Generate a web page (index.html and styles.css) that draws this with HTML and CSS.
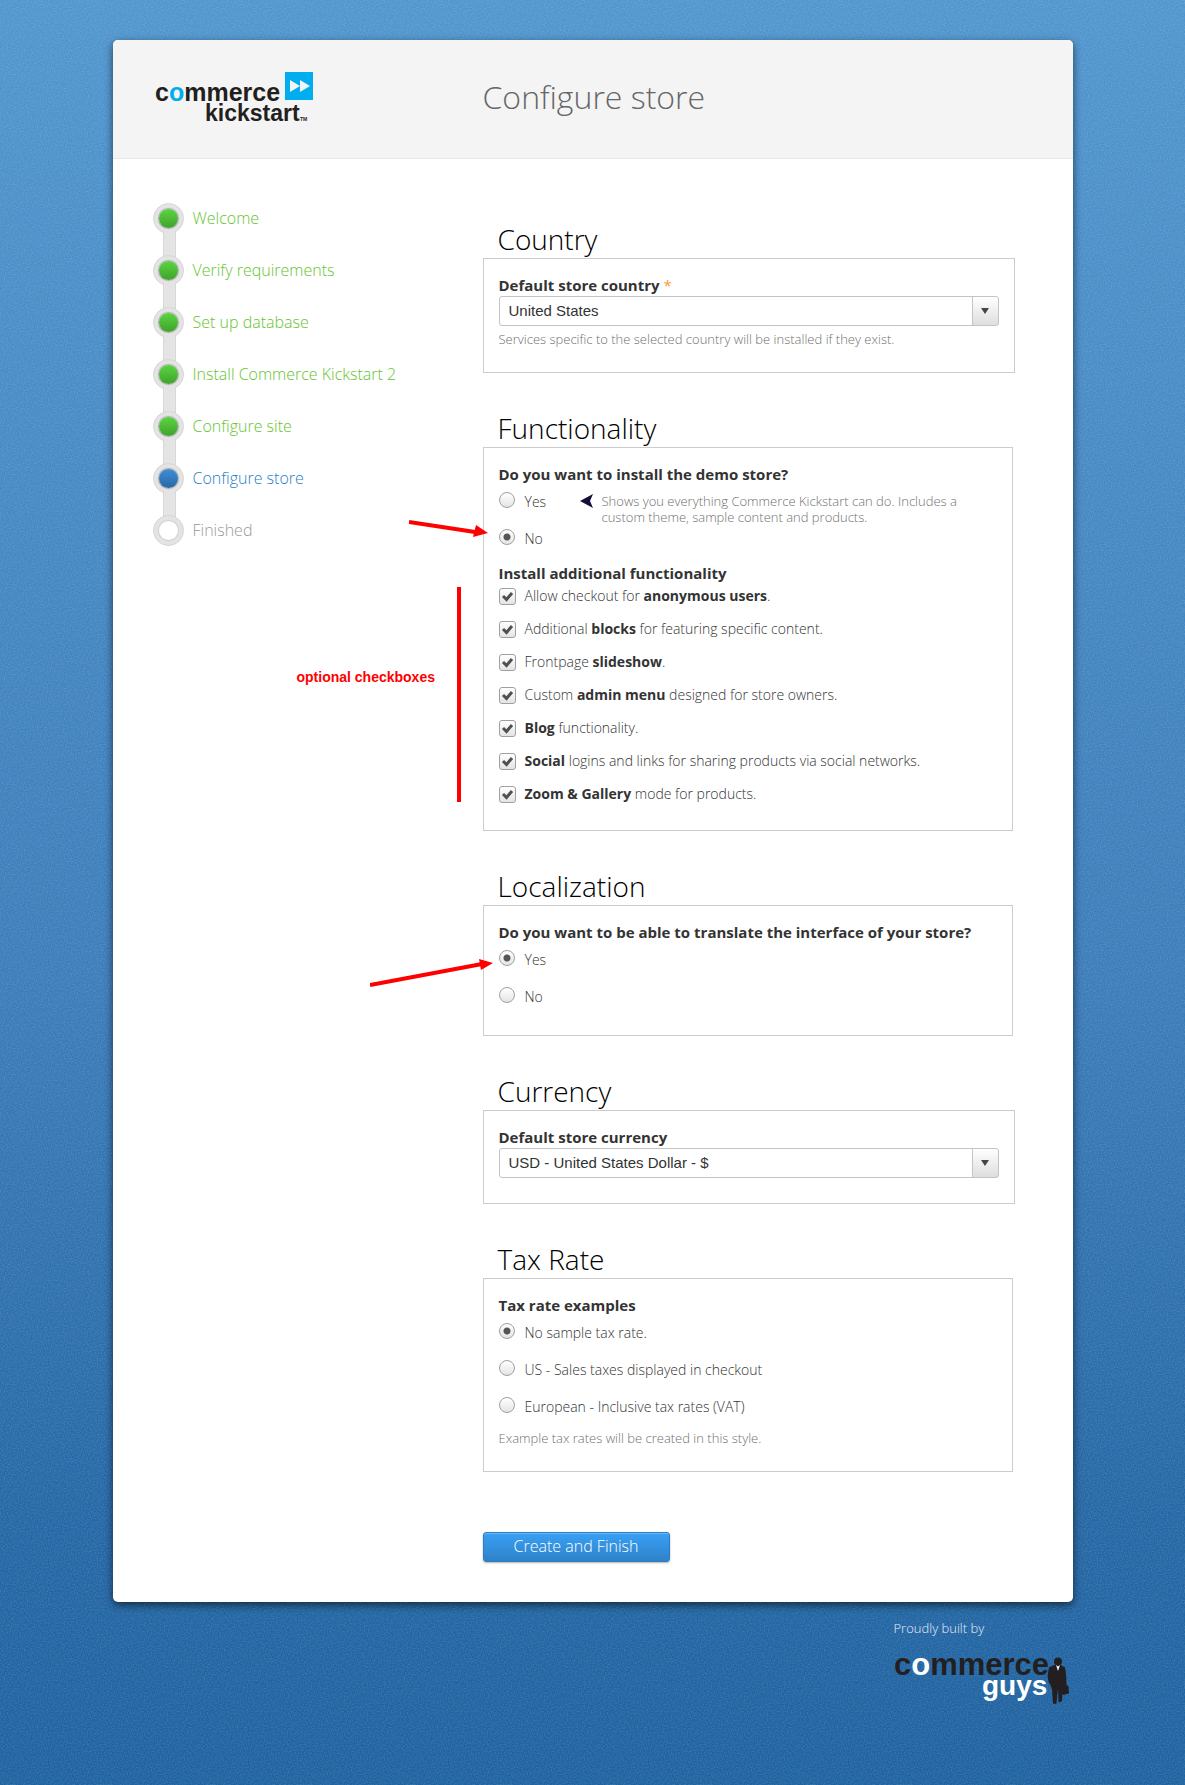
FILE: index.html
```html
<!DOCTYPE html>
<html lang="en">
<head>
<meta charset="utf-8">
<meta name="viewport" content="width=device-width, initial-scale=1">
<title>Configure store</title>
<link rel="stylesheet" href="styles.css">
</head>
<body>
<div class="page">
  <div class="card">
    <header class="card-header">
      <div class="brand">
        <svg class="logo" width="160" height="60" viewBox="0 0 160 60" role="img" aria-label="commerce kickstart">
          <text class="logo-text" x="0" y="31" font-size="25" fill="#231f20">c<tspan fill="#00aeef">o</tspan>mmerce</text>
          <text class="logo-text" x="50" y="51" font-size="23" fill="#231f20">kickstart</text>
          <text class="logo-text" x="145" y="51" font-size="5" fill="#231f20">TM</text>
          <rect x="130" y="2" width="28" height="28" fill="#00aeef"/>
          <path d="M135 10l10 6-10 6zM145 10l10 6-10 6z" fill="#f4f4f4"/>
        </svg>
      </div>
      <h1 class="title">Configure store</h1>
    </header>

    <div class="card-body">
      <nav aria-label="Installation steps">
        <ol class="steps">
          <li class="step done"><span class="dot"></span>Welcome</li>
          <li class="step done"><span class="dot"></span>Verify requirements</li>
          <li class="step done"><span class="dot"></span>Set up database</li>
          <li class="step done"><span class="dot"></span>Install Commerce Kickstart 2</li>
          <li class="step done"><span class="dot"></span>Configure site</li>
          <li class="step active" aria-current="step"><span class="dot"></span>Configure store</li>
          <li class="step"><span class="dot"></span>Finished</li>
        </ol>
      </nav>

      <form class="form">
        <section class="section">
          <h2>Country</h2>
          <div class="panel panel-wide">
            <label class="label" for="country">Default store country <span class="required">*</span></label>
            <select class="select" id="country"><option>United States</option></select>
            <p class="hint">Services specific to the selected country will be installed if they exist.</p>
          </div>
        </section>

        <section class="section">
          <h2>Functionality</h2>
          <div class="panel">
            <fieldset class="group">
              <legend class="label">Do you want to install the demo store?</legend>
              <div class="radios">
                <div class="demo-row">
                  <label class="option"><input type="radio" name="demo">Yes</label>
                  <svg class="pointer" width="14" height="14" viewBox="0 0 14 14" aria-hidden="true"><path d="M0 7L13 0 10 7l3 7z" fill="#140f3a"/></svg>
                  <p class="demo-hint">Shows you everything Commerce Kickstart can do. Includes a custom theme, sample content and products.</p>
                </div>
                <label class="option"><input type="radio" name="demo" checked>No</label>
              </div>
            </fieldset>
            <fieldset class="group extras">
              <legend class="label">Install additional functionality</legend>
              <div class="checks">
                <label class="option"><input type="checkbox" checked><span>Allow checkout for <b>anonymous users</b>.</span></label>
                <label class="option"><input type="checkbox" checked><span>Additional <b>blocks</b> for featuring specific content.</span></label>
                <label class="option"><input type="checkbox" checked><span>Frontpage <b>slideshow</b>.</span></label>
                <label class="option"><input type="checkbox" checked><span>Custom <b>admin menu</b> designed for store owners.</span></label>
                <label class="option"><input type="checkbox" checked><span><b>Blog</b> functionality.</span></label>
                <label class="option"><input type="checkbox" checked><span><b>Social</b> logins and links for sharing products via social networks.</span></label>
                <label class="option"><input type="checkbox" checked><span><b>Zoom &amp; Gallery</b> mode for products.</span></label>
              </div>
            </fieldset>
          </div>
          <svg class="note note-demo" width="80" height="20" viewBox="0 0 80 20" aria-hidden="true">
            <path d="M0 4L66 14" stroke="#f00" stroke-width="4"/><path d="M67 7L79 15 64 19z" fill="#f00"/>
          </svg>
          <div class="note note-extras">optional checkboxes</div>
        </section>

        <section class="section">
          <h2>Localization</h2>
          <div class="panel">
            <fieldset class="group">
              <legend class="label">Do you want to be able to translate the interface of your store?</legend>
              <div class="radios last">
                <label class="option"><input type="radio" name="translate" checked>Yes</label>
                <label class="option"><input type="radio" name="translate">No</label>
              </div>
            </fieldset>
          </div>
          <svg class="note note-translate" width="124" height="30" viewBox="0 0 124 30" aria-hidden="true">
            <path d="M0 26L112 5" stroke="#f00" stroke-width="4"/><path d="M109 0L123 4 111 11z" fill="#f00"/>
          </svg>
        </section>

        <section class="section">
          <h2>Currency</h2>
          <div class="panel panel-wide">
            <label class="label" for="currency">Default store currency</label>
            <select class="select" id="currency"><option>USD - United States Dollar - $</option></select>
          </div>
        </section>

        <section class="section">
          <h2>Tax Rate</h2>
          <div class="panel">
            <fieldset class="group">
              <legend class="label">Tax rate examples</legend>
              <div class="radios">
                <label class="option"><input type="radio" name="tax" checked>No sample tax rate.</label>
                <label class="option"><input type="radio" name="tax">US - Sales taxes displayed in checkout</label>
                <label class="option"><input type="radio" name="tax">European - Inclusive tax rates (VAT)</label>
              </div>
            </fieldset>
            <p class="hint hint-radios">Example tax rates will be created in this style.</p>
          </div>
        </section>

        <button class="submit" type="submit">Create and Finish</button>
      </form>
    </div>
  </div>

  <footer class="footer">
    <div class="credit">
      <span>Proudly built by</span>
      <svg class="logo" width="176" height="60" viewBox="0 0 176 60" role="img" aria-label="commerce guys">
        <text class="logo-text" x="0" y="28" font-size="31" fill="#231f20">c<tspan fill="#fff">o</tspan>mmerce</text>
        <text class="logo-text" x="88" y="48" font-size="28" fill="#fff">guys</text>
        <circle cx="164" cy="14.500" r="4" fill="#231f20"/>
        <path d="M161 18h6l4 2.500c1 4 1.500 11 1.500 17l2 2 .5 7-6 1.500-.5-1.500-.5 7.500-2.500 1.500-1-1-.5-13-1 9-.5 6-1.500.5-2-.5-1-14-2-6h-1l-.5-2-1-6 1.500-8 4-2z" fill="#231f20"/>
        <path d="M162 18l2 1.500 2-1.500-2 6z" fill="#fff"/>
      </svg>
    </div>
  </footer>
</div>
</body>
</html>
```

FILE: styles.css
```css
* {
  box-sizing: border-box;
}

body {
  margin: 0;
  min-height: 100vh;
  font: 300 14px/20px "Open Sans", sans-serif;
  color: #333;
  background:
    url("data:image/svg+xml,%3Csvg xmlns='http://www.w3.org/2000/svg' width='200' height='200'%3E%3Cfilter id='n' x='0' y='0' width='1' height='1'%3E%3CfeTurbulence type='fractalNoise' baseFrequency='.7' stitchTiles='stitch'/%3E%3CfeColorMatrix values='0 0 0 0 1 0 0 0 0 1 0 0 0 0 1 .3 0 0 0 -.11'/%3E%3C/filter%3E%3Crect width='200' height='200' filter='url(%23n)'/%3E%3C/svg%3E"),
    linear-gradient(#5096ce, #3b7cb9 55%, #2467a5 85%, #1e62a0);
}

h1,
h2,
p,
ol {
  margin: 0;
  padding: 0;
  font-weight: 300;
}

.page {
  max-width: 960px;
  margin: 0 auto;
  padding: 40px 0 72px;
}

.card {
  background: #fff;
  border-radius: 5px;
  box-shadow: 0 3px 8px rgba(0, 0, 0, 0.6);
}

.card-header,
.card-body {
  display: grid;
  grid-template-columns: 370px 1fr;
}

.card-header {
  min-height: 119px;
  background: #f4f4f4;
  border-bottom: 1px solid #e6e6e6;
  border-radius: 5px 5px 0 0;
}

.brand {
  padding: 30px 0 0 42px;
}

.logo {
  display: block;
  overflow: visible;
}

.logo-text {
  font-family: "Liberation Sans", Arial, sans-serif;
  font-weight: 700;
}

.title {
  padding-top: 35px;
  font-size: 32px;
  line-height: 44px;
  color: #666;
}

/* Progress steps */

.steps {
  display: grid;
  gap: 22px;
  padding: 44px 0 0 40px;
  list-style: none;
  font-size: 16px;
}

.step {
  position: relative;
  display: flex;
  align-items: center;
  gap: 9px;
  height: 30px;
  color: #999;
}

.step:not(:last-child)::before {
  content: "";
  position: absolute;
  left: 10px;
  top: 28px;
  width: 11px;
  height: 26px;
  background: #e4e4e4;
  border: solid #d8d8d8;
  border-width: 0 1px;
}

.dot {
  width: 31px;
  height: 31px;
  padding: 5px;
  border: 1px solid #d6d6d6;
  border-radius: 50%;
  background: #e4e4e4;
}

.dot::before {
  content: "";
  display: block;
  height: 19px;
  border-radius: 50%;
  background: #fff;
  box-shadow: 0 0 1px 1px #d0d0d0;
}

.done {
  color: #66c42e;
}

.done .dot::before {
  background: linear-gradient(#5bd540, #3fa22c);
  box-shadow: 0 0 1px 1px #a6aea6;
}

.active {
  color: #287ec6;
}

.active .dot::before {
  background: linear-gradient(#428dd6, #2768a4);
  box-shadow: 0 0 1px 1px #a0a8b0;
}

/* Form */

.form {
  display: grid;
  gap: 36px;
  padding: 61px 58px 40px 0;
}

.section {
  position: relative;
}

.section h2 {
  padding-left: 15px;
  font-size: 28px;
  line-height: 38px;
  color: #000;
}

.panel {
  margin-right: 2px;
  padding: 17px 15px 25px;
  border: 1px solid #ccc;
}

.panel-wide {
  margin-right: 0;
}

.group {
  margin: 0;
  padding: 0;
  border: 0;
  min-width: 0;
}

.label {
  display: block;
  padding: 0 0 2px;
  font-size: 15px;
  line-height: 18px;
  font-weight: 700;
  color: #333;
}

.required {
  font-weight: 400;
  color: #f93;
}

.select {
  appearance: none;
  display: block;
  width: 100%;
  height: 30px;
  padding: 0 36px 2px 9px;
  border: 1px solid #c4c4c4;
  border-radius: 3px;
  font: 15px "Liberation Sans", Arial, sans-serif;
  color: #333;
  background:
    url("data:image/svg+xml,%3Csvg xmlns='http://www.w3.org/2000/svg' width='8' height='6'%3E%3Cpath d='M0 0h8L4 6z' fill='%23444'/%3E%3C/svg%3E") no-repeat right 9px center,
    linear-gradient(#c4c4c4, #c4c4c4) no-repeat right 25px top / 1px 100%,
    linear-gradient(#fff, #dedede) no-repeat right top / 25px 100%,
    #fff;
}

.hint,
.demo-hint {
  font-size: 13px;
  line-height: 16px;
  color: #707070;
}

.hint {
  margin-top: 5px;
}

.hint-radios {
  margin-top: 13px;
}

.radios {
  display: grid;
  gap: 17px;
  padding-top: 7px;
}

.radios.last {
  padding-bottom: 3px;
}

.extras {
  margin-top: 15px;
}

.checks {
  display: grid;
  gap: 13px;
  padding: 2px 0 1px;
}

.option {
  display: flex;
  align-items: flex-start;
  gap: 10px;
  height: 20px;
}

.checks .option {
  align-items: center;
  gap: 9px;
}

.option b {
  font-weight: 700;
  color: #333;
}

.option input {
  appearance: none;
  flex: none;
  width: 16px;
  height: 16px;
  margin: 0;
  border: 1px solid #a0a0a0;
  border-radius: 50%;
  background: linear-gradient(#fff, #e4e4e4);
}

.option input[type="radio"]:checked {
  background:
    radial-gradient(circle, #555 0 3px, transparent 4px),
    linear-gradient(#fff, #e4e4e4);
}

.option input[type="checkbox"] {
  width: 17px;
  height: 17px;
  border-radius: 3px;
}

.option input[type="checkbox"]:checked {
  background:
    url("data:image/svg+xml,%3Csvg xmlns='http://www.w3.org/2000/svg' width='13' height='11'%3E%3Cpath d='M2 5l3.500 3.500L11 2' fill='none' stroke='%23505050' stroke-width='3'/%3E%3C/svg%3E") no-repeat center,
    linear-gradient(#fff, #e4e4e4);
}

.demo-row {
  display: grid;
  grid-template-columns: 72px 13px 1fr;
  column-gap: 9px;
  height: 20px;
  margin-right: 32px;
}

.pointer {
  margin-top: 2px;
}

.demo-hint {
  margin-top: 1px;
}

.submit {
  justify-self: start;
  width: 187px;
  height: 30px;
  margin-top: 24px;
  padding: 0 0 2px;
  border: 1px solid #2a7cc4;
  border-radius: 3px;
  font: 300 16px/26px "Open Sans", sans-serif;
  color: #fff;
  background: linear-gradient(#38a0f5, #2f82c8);
  box-shadow: 0 1px 2px rgba(0, 0, 0, 0.3), inset 0 1px 0 rgba(255, 255, 255, 0.25);
}

/* Red notes drawn over the page */

.note {
  position: absolute;
}

.note-demo {
  left: -74px;
  top: 109px;
}

.note-extras {
  right: calc(100% + 22px);
  top: 178px;
  width: 164px;
  height: 215px;
  padding-top: 80px;
  border-right: 4px solid #f00;
  font: 700 14px/20px "Liberation Sans", Arial, sans-serif;
  color: #f00;
}

.note-translate {
  left: -113px;
  top: 92px;
}

/* Footer */

.footer {
  display: flex;
  justify-content: flex-end;
  padding: 16px 3px 0 0;
}

.credit {
  display: grid;
  gap: 9px;
  font-size: 13px;
  color: #e4eef7;
}
```
